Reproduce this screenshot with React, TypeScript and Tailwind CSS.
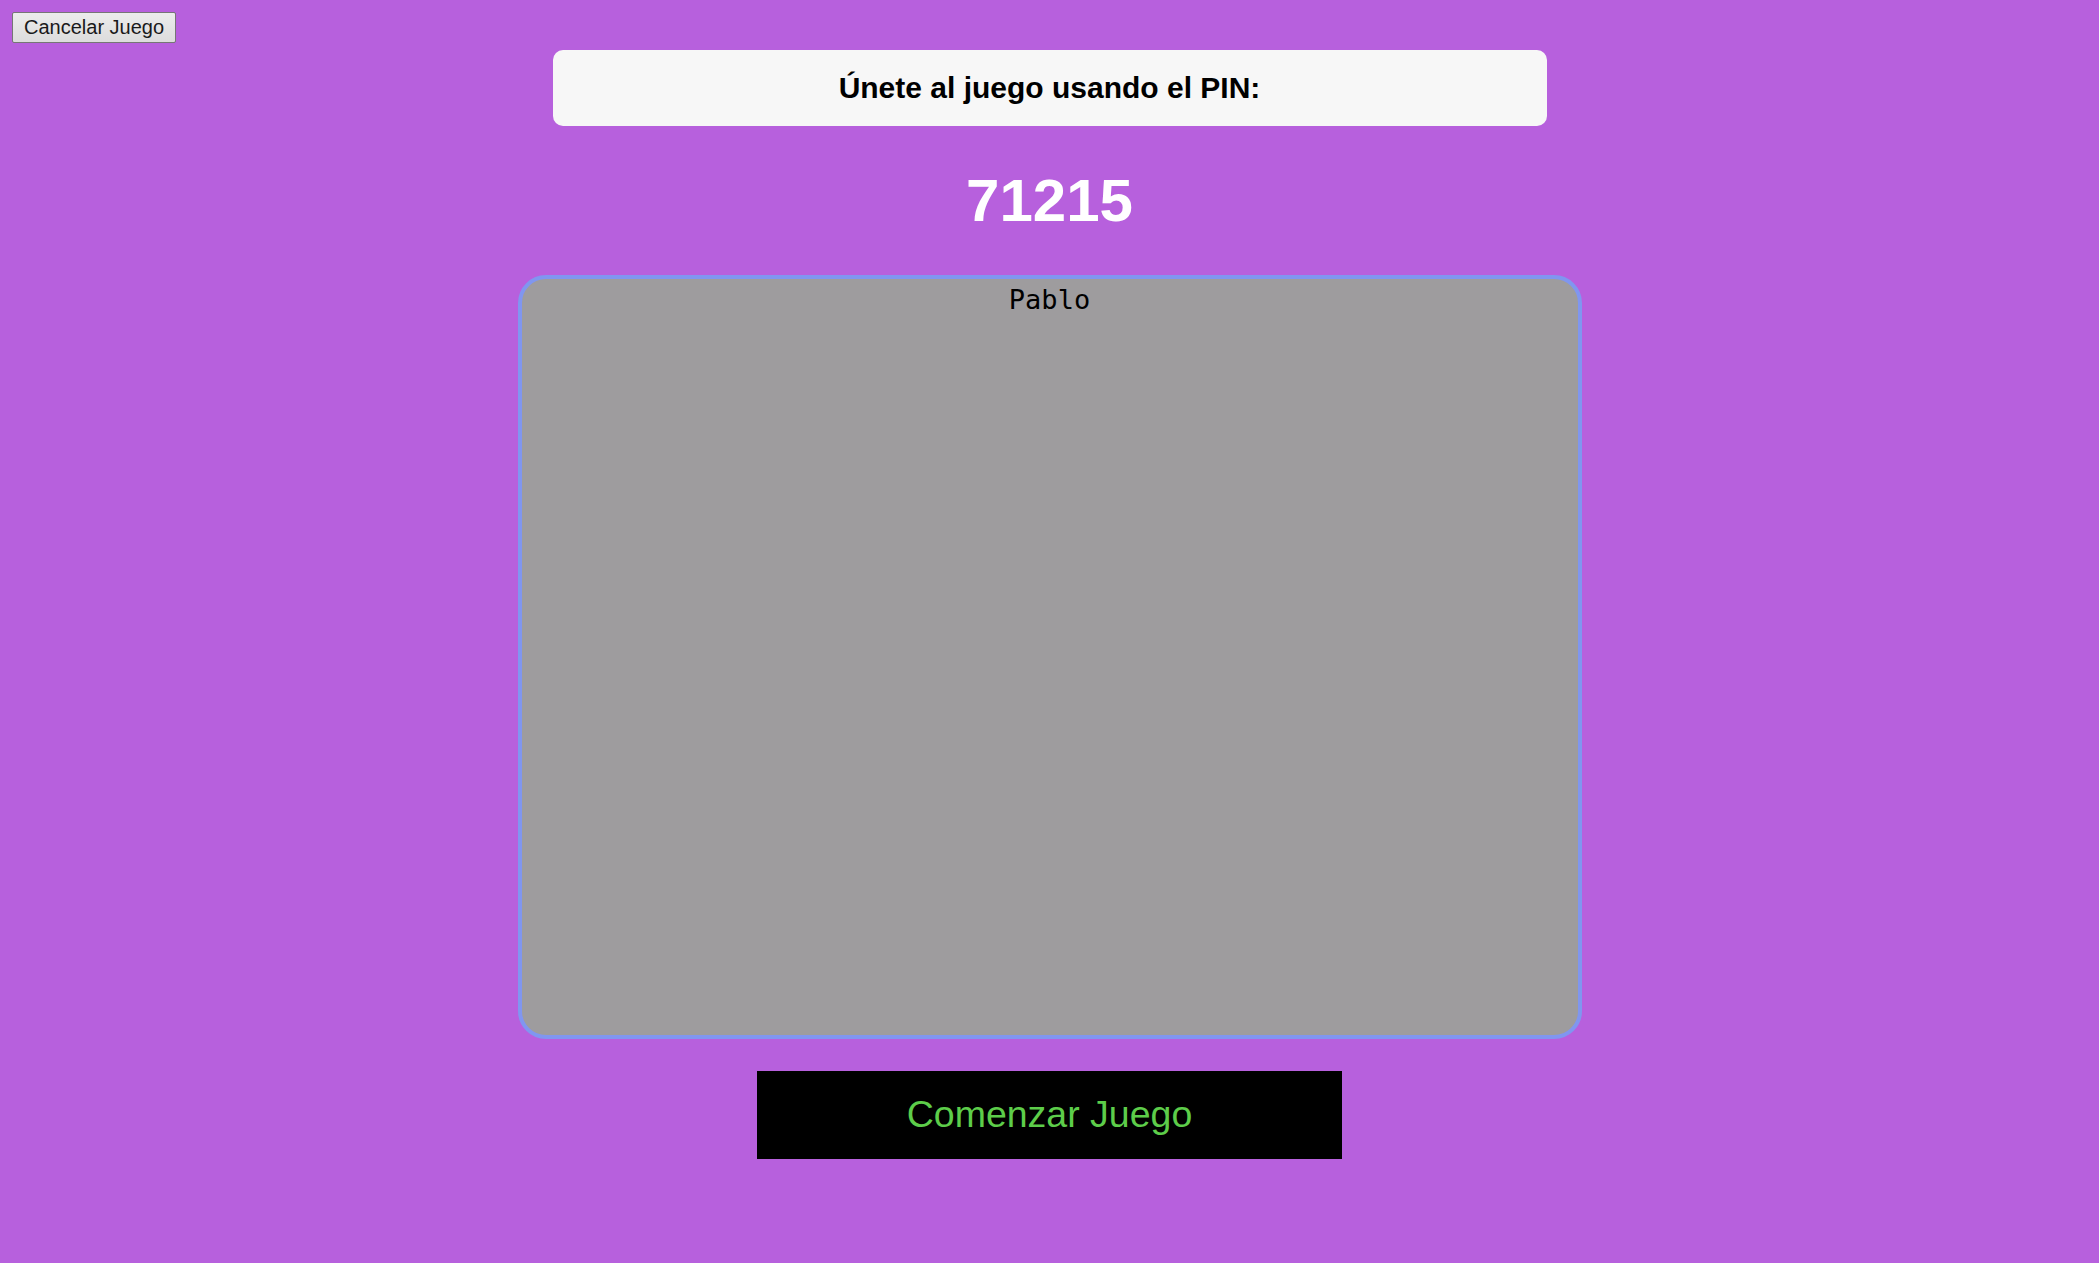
import React from "react";

export default function App() {
  return (
    <div className="min-h-[1263px] w-full bg-[#b760dd] p-[12px] font-['Liberation_Sans',Arial,sans-serif]">
      <button className="block h-[31px] border border-[#767676] bg-gradient-to-b from-[#ececec] to-[#dcdcdc] px-[11px] text-[20px] leading-[23px] text-[#1a1a1a] rounded-[2px]">
        Cancelar Juego
      </button>
      <div className="flex flex-col items-center">
        <div className="mt-[7px] flex h-[76px] w-[994px] items-center justify-center rounded-[10px] bg-[#f7f7f7]">
          <span className="text-[30px] font-bold leading-none text-black">
            Únete al juego usando el PIN:
          </span>
        </div>
        <div className="mt-[45px] h-[60px] text-[60px] font-bold leading-[60px] text-white">
          71215
        </div>
        <div className="mt-[44px] box-border h-[764px] w-[1064px] rounded-[28px] border-[4px] border-[#8096f0] bg-[#9e9c9e] pt-[5px] text-center">
          <div className="font-['DejaVu_Sans_Mono',monospace] text-[27px] leading-[31px] text-black">
            Pablo
          </div>
        </div>
        <button className="mt-[32px] flex h-[88px] w-[585px] items-center justify-center bg-black text-[37.5px] leading-none text-[#5dcd4a]">
          Comenzar Juego
        </button>
      </div>
    </div>
  );
}
